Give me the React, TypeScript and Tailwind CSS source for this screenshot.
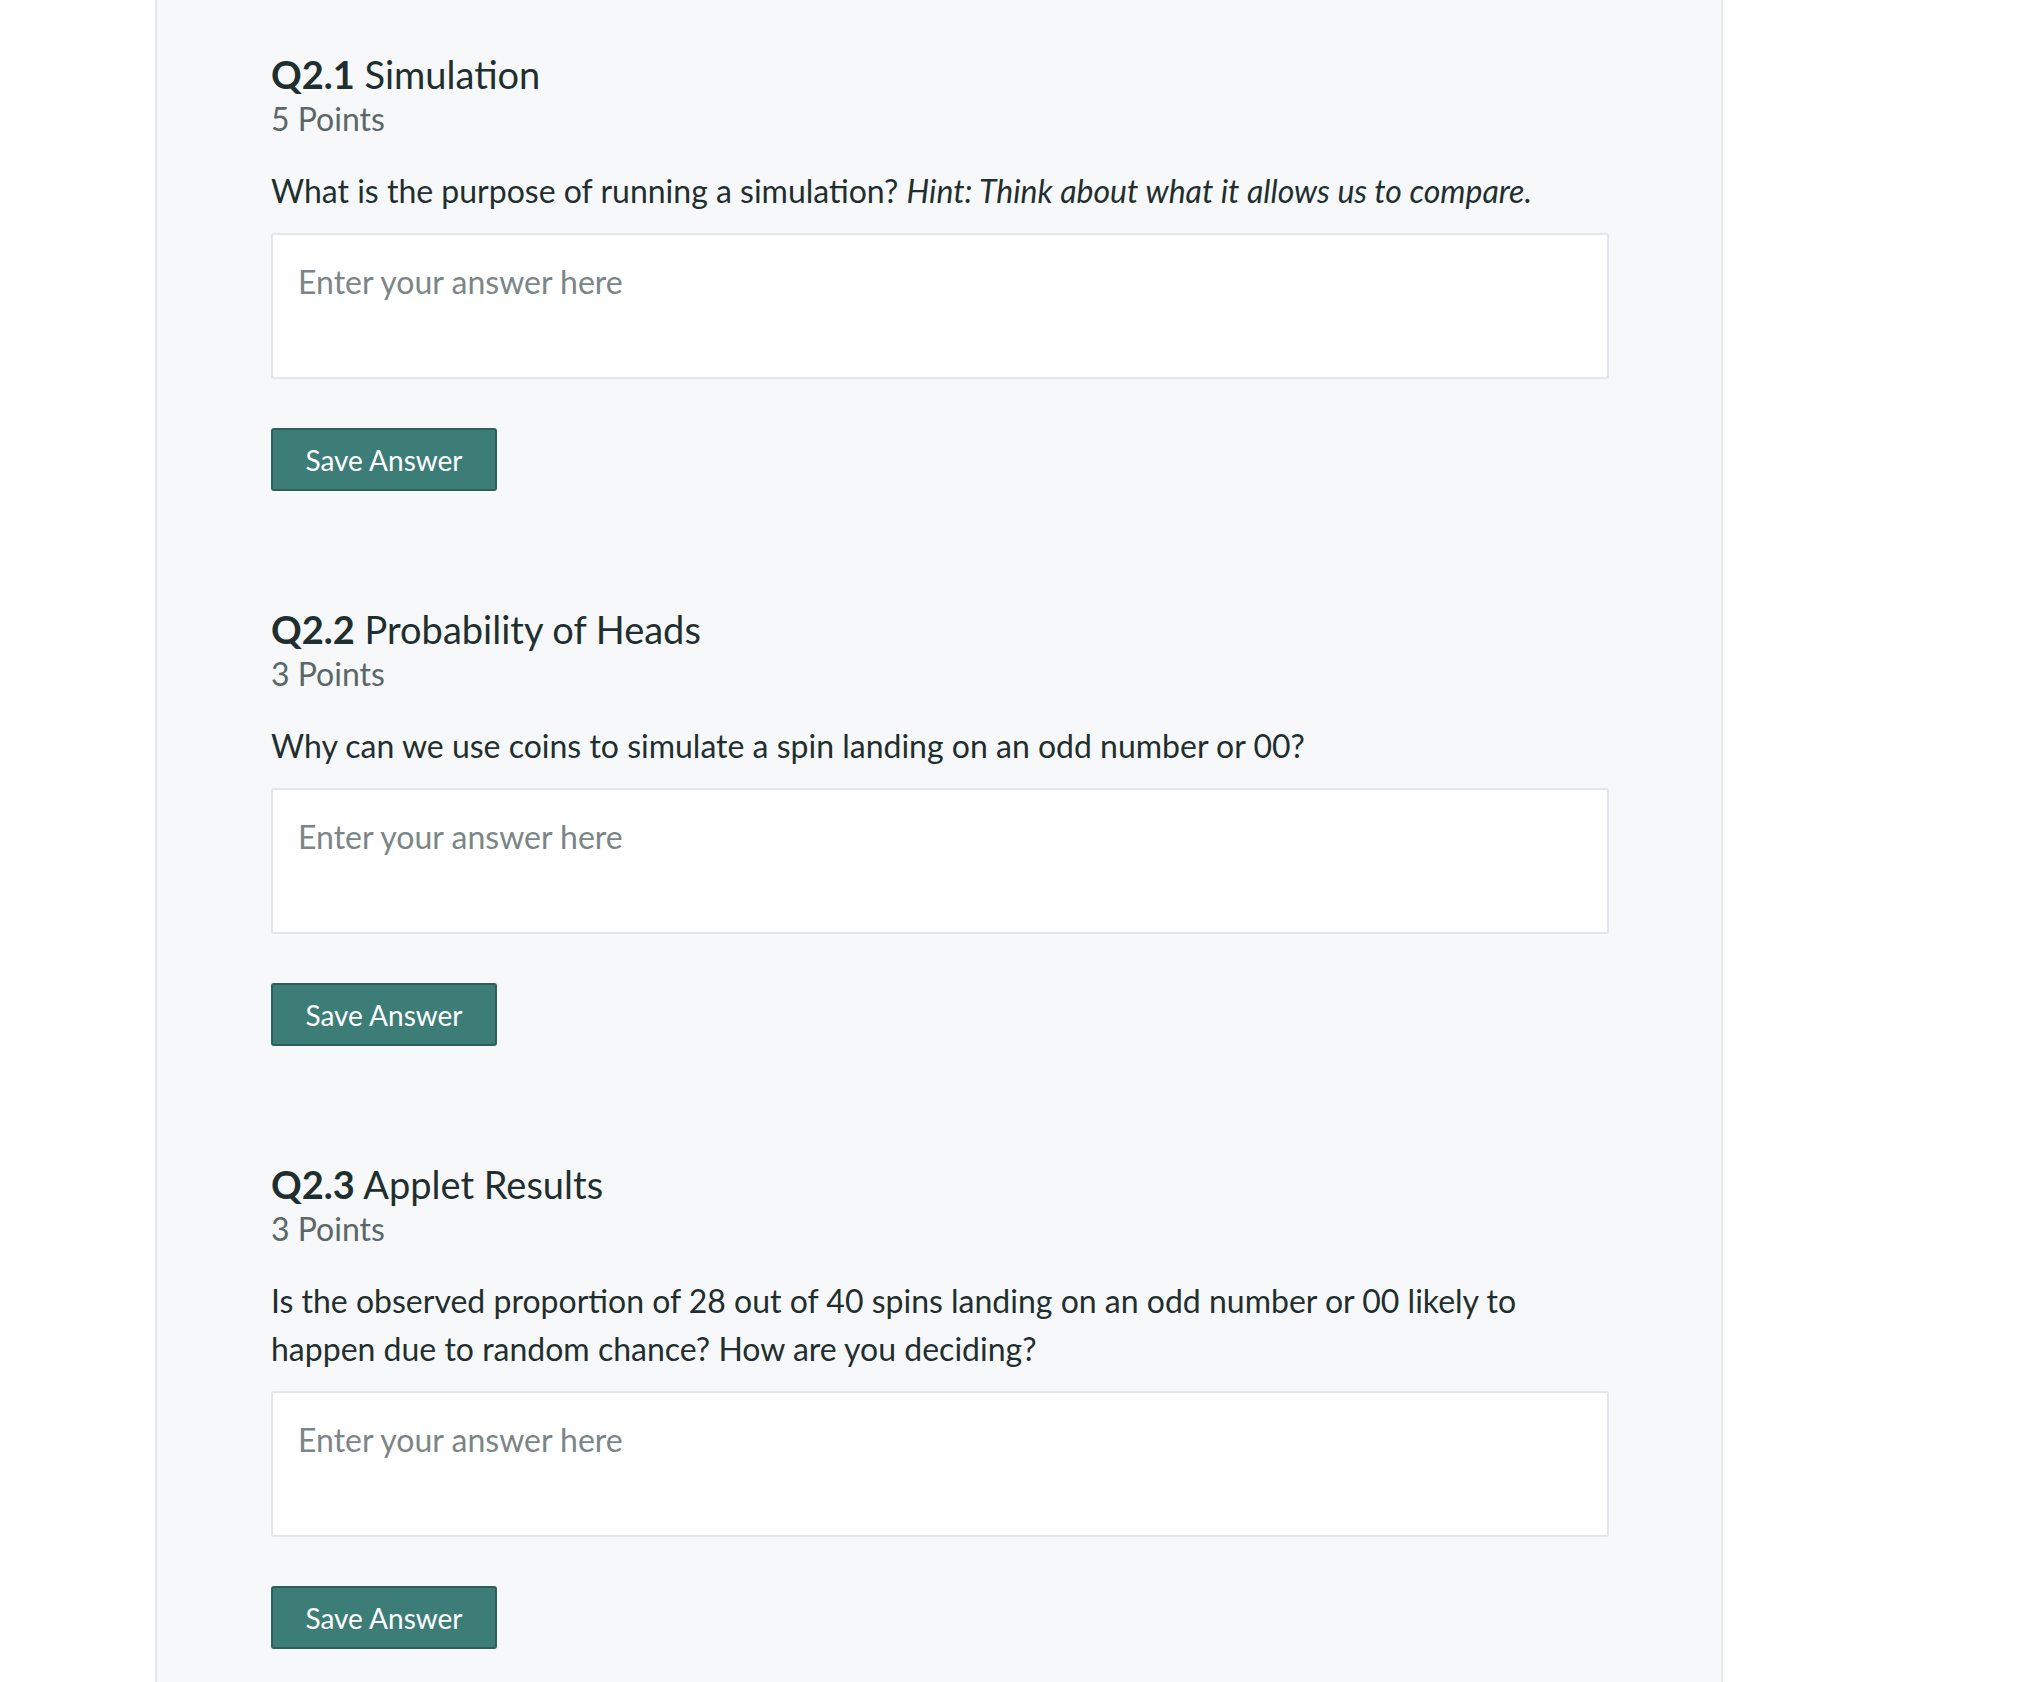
import { useState } from "react";

interface Question {
  id: string;
  title: string;
  points: number;
  prompt: string;
  hint?: string;
}

const questions: Question[] = [
  {
    id: "Q2.1",
    title: "Simulation",
    points: 5,
    prompt: "What is the purpose of running a simulation?",
    hint: "Hint: Think about what it allows us to compare.",
  },
  {
    id: "Q2.2",
    title: "Probability of Heads",
    points: 3,
    prompt:
      "Why can we use coins to simulate a spin landing on an odd number or 00?",
  },
  {
    id: "Q2.3",
    title: "Applet Results",
    points: 3,
    prompt:
      "Is the observed proportion of 28 out of 40 spins landing on an odd number or 00 likely to happen due to random chance? How are you deciding?",
  },
];

function QuestionBlock({ q }: { q: Question }) {
  const [answer, setAnswer] = useState("");

  return (
    <div className="mb-[116px]">
      <h2 className="text-[38px] leading-[45px] text-[#1f2f2f]">
        <span className="font-bold">{q.id}</span> {q.title}
      </h2>
      <p className="text-[32px] leading-[44px] text-[#5b6768]">
        {q.points} Points
      </p>
      <p className="mt-[26px] w-[1338px] text-[32px] leading-[48px] text-[#1f2f2f]">
        {q.prompt}
        {q.hint && (
          <>
            {" "}
            <em>{q.hint}</em>
          </>
        )}
      </p>
      <textarea
        value={answer}
        onChange={(e) => setAnswer(e.target.value)}
        placeholder="Enter your answer here"
        className="mt-[18px] block h-[146px] w-[1338px] resize-none rounded-[3px] border-2 border-[#e3e6ea] bg-white px-[25px] pt-[27px] text-[32px] leading-[40px] text-[#1f2f2f] outline-none placeholder:text-[#7a8687]"
      />
      <button className="mt-[49px] h-[63px] w-[226px] rounded-[3px] border-2 border-[#2d5f5b] bg-[#3d7d78] text-[28px] text-white">
        Save Answer
      </button>
    </div>
  );
}

export default function App() {
  return (
    <div className="min-h-screen bg-white font-['Lato',sans-serif]">
      <div className="ml-[155px] min-h-[1682px] w-[1568px] border-x-2 border-[#e4e7eb] bg-[#f7f8fa] pl-[114px] pt-[52px]">
        {questions.map((q) => (
          <QuestionBlock key={q.id} q={q} />
        ))}
      </div>
    </div>
  );
}
